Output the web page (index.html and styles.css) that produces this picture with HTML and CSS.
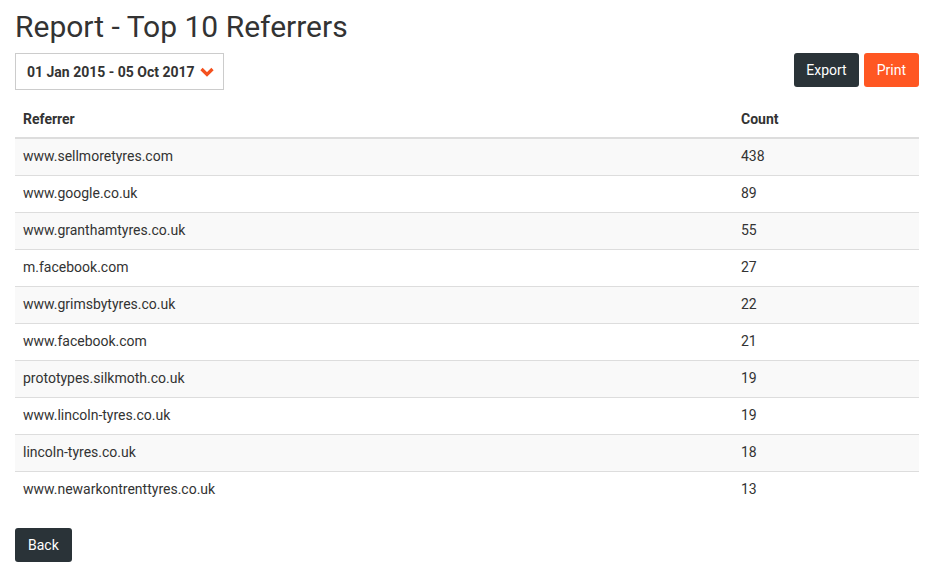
FILE: index.html
```html
<!DOCTYPE html>
<html>
<head>
<meta charset="utf-8">
<link rel="stylesheet" href="styles.css">
</head>
<body>
<div class="page">
  <h1 class="title">Report - Top 10 Referrers</h1>
  <div class="toolbar">
    <div class="daterange">
      <span>01 Jan 2015 - 05 Oct 2017</span>
      <svg class="chev" width="14" height="10" viewBox="0 0 14 10"><path d="M1.5 2 L7 7.5 L12.5 2" fill="none" stroke="#f4511e" stroke-width="3.2" stroke-linecap="butt" stroke-linejoin="miter"/></svg>
    </div>
    <div class="actions">
      <button class="btn btn-dark btn-export">Export</button>
      <button class="btn btn-orange">Print</button>
    </div>
  </div>
  <table class="report">
    <thead>
      <tr><th>Referrer</th><th class="count">Count</th></tr>
    </thead>
    <tbody>
      <tr><td>www.sellmoretyres.com</td><td>438</td></tr>
      <tr><td>www.google.co.uk</td><td>89</td></tr>
      <tr><td>www.granthamtyres.co.uk</td><td>55</td></tr>
      <tr><td>m.facebook.com</td><td>27</td></tr>
      <tr><td>www.grimsbytyres.co.uk</td><td>22</td></tr>
      <tr><td>www.facebook.com</td><td>21</td></tr>
      <tr><td>prototypes.silkmoth.co.uk</td><td>19</td></tr>
      <tr><td>www.lincoln-tyres.co.uk</td><td>19</td></tr>
      <tr><td>lincoln-tyres.co.uk</td><td>18</td></tr>
      <tr><td>www.newarkontrenttyres.co.uk</td><td>13</td></tr>
    </tbody>
  </table>
  <div class="footer">
    <button class="btn btn-dark">Back</button>
  </div>
</div>
</body>
</html>
```

FILE: styles.css
```css
* { box-sizing: border-box; }
html, body { margin: 0; padding: 0; background: #fff; }
body { font-family: Roboto, "Liberation Sans", sans-serif; font-size: 14px; color: #333; }
.page { padding: 0 11px 0 15px; }
.title { font-size: 30px; font-weight: 400; margin: 0; padding-top: 9px; line-height: 36px; height: 53px; color: #333; }
.toolbar { display: flex; justify-content: space-between; align-items: flex-start; height: 48px; }
.daterange { width: 209px; height: 37px; border: 1px solid #ccc; display: flex; align-items: center; padding-left: 11px; font-weight: 700; color: #333; gap: 5px; }
.chev { margin-top: 1px; }
.actions { display: flex; gap: 5px; }
.btn { font-family: Roboto, "Liberation Sans", sans-serif; font-size: 14px; color: #fff; border: none; border-radius: 3px; height: 34px; padding: 0 13px; cursor: pointer; }
.btn-export { padding: 0 12px; }
.btn-dark { background: #2a3338; }
.btn-orange { background: #ff5722; }
.report { width: 100%; border-collapse: collapse; }
.report th { text-align: left; font-weight: 700; height: 37px; padding: 0 8px 1px; border-bottom: 2px solid #ddd; vertical-align: middle; }
.report th.count { width: 186px; }
.report td { height: 37px; padding: 0 8px 1px; border-top: 1px solid #ddd; vertical-align: middle; }
.report tbody tr:first-child td { border-top: none; }
.report tbody tr:nth-child(odd) td { background: #f9f9f9; }
.footer { padding-top: 20px; }
```
